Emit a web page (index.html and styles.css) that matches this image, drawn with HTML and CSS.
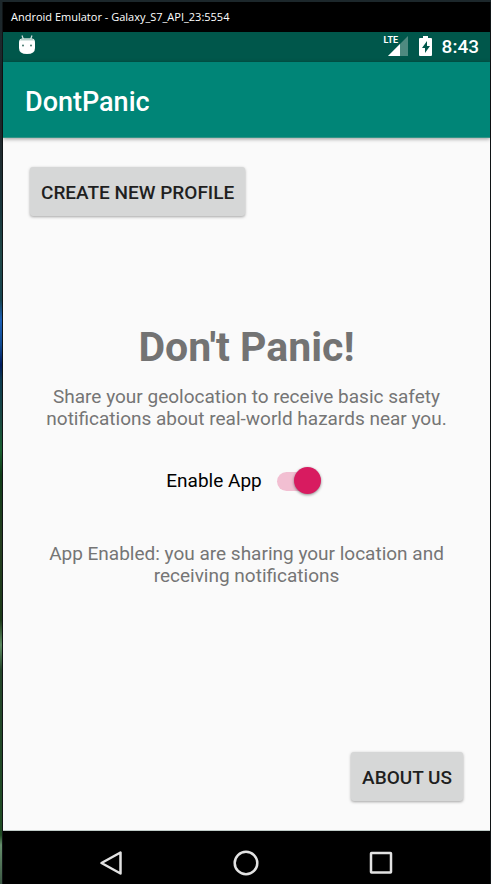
FILE: index.html
```html
<!DOCTYPE html>
<html lang="en">
<head>
<meta charset="utf-8">
<meta name="viewport" content="width=device-width, initial-scale=1">
<title>DontPanic</title>
<link rel="stylesheet" href="styles.css">
</head>
<body>
<div class="window">
  <div class="titlebar">Android Emulator - Galaxy_S7_API_23:5554</div>
  <div class="status">
    <svg class="droid" width="18" height="20" viewBox="0 0 18 20" aria-hidden="true">
      <path d="M4 .5l1.500 4M14 .5l-1.500 4" stroke="#d5e5e2" stroke-width="1.200" fill="none"/>
      <path d="M1 7.500Q1 3.500 4.500 3.500h9Q17 3.500 17 7.500V13Q17 19 9 19T1 13z" fill="#fff"/>
      <path d="M2 5.500Q3 3.500 5 3.500h8q2 0 3 2z" fill="#b5cfca"/>
      <circle cx="5" cy="10.500" r="1" fill="#42766c"/><circle cx="13" cy="10.500" r="1" fill="#42766c"/>
    </svg>
    <div class="signal">
      <span class="lte">LTE</span>
      <svg width="20" height="20" viewBox="0 0 20 20" aria-hidden="true">
        <path d="M20 0V20H0z" fill="#4f8a80"/><path d="M12 8V20H0z" fill="#fff"/>
      </svg>
    </div>
    <svg class="battery" width="13" height="20" viewBox="0 0 13 20" aria-hidden="true">
      <path d="M4 0h5v2h3q1 0 1 1v16q0 1-1 1H1q-1 0-1-1V3q0-1 1-1h3z" fill="#fff"/>
      <path d="M8 5L3 12h3v5l5-7H8z" fill="#00574b"/>
    </svg>
    <time class="clock">8:43</time>
  </div>
  <header class="appbar"><h1 class="apptitle">DontPanic</h1></header>
  <main class="content">
    <button class="btn" type="button">CREATE NEW PROFILE</button>
    <section class="intro">
      <h2 class="headline">Don't Panic!</h2>
      <p class="text">Share your geolocation to receive basic safety notifications about real-world hazards near you.</p>
      <label class="toggle" for="enable">Enable App
        <input class="switch" id="enable" type="checkbox" role="switch" checked>
      </label>
      <p class="text">App Enabled: you are sharing your location and receiving notifications</p>
    </section>
    <button class="btn about" type="button">ABOUT US</button>
  </main>
  <nav class="nav" aria-label="System">
    <button class="key" type="button" aria-label="Back"><svg width="26" height="26" viewBox="0 0 26 26"><path d="M22.500 2.500V23.500L3.500 13z"/></svg></button>
    <button class="key" type="button" aria-label="Home"><svg width="26" height="26" viewBox="0 0 26 26"><circle cx="13" cy="13" r="11.300"/></svg></button>
    <button class="key" type="button" aria-label="Recent apps"><svg width="26" height="26" viewBox="0 0 26 26"><rect x="3" y="3" width="20" height="19.500" rx=".5"/></svg></button>
  </nav>
</div>
</body>
</html>
```
FILE: styles.css
```css
* { box-sizing: border-box; }
body {
  margin: 0;
  min-height: 100vh;
  display: flex;
  padding: 2px 0 0 2px;
  background: linear-gradient(#1c272b 0, #20282c 140px, #19373c 210px, #204848 255px, #164450 300px, #1b60b8 320px, #104a90 345px, #001c60 365px, #0d3c50 380px, #1b4942 420px, #1a6030 450px, #103c18 475px, #253e20 540px, #1c3918 620px, #5d8b61 645px, #24452a 670px, #204c24 835px, #668e6c 845px, #3c5844 884px);
  font-family: Roboto, "Liberation Sans", sans-serif;
}
.window {
  flex: 1;
  display: flex;
  flex-direction: column;
  border: solid #101416;
  border-width: 0 1px;
  background: #000;
}
.titlebar {
  height: 30px;
  padding-left: 8px;
  color: #fff;
  font: 11px/30px "Open Sans", sans-serif;
}
.status {
  display: flex;
  align-items: center;
  height: 30px;
  padding: 0 11px 0 15px;
  background: #00574b;
  color: #fff;
}
.droid { margin-bottom: 4px; }
.signal {
  position: relative;
  display: flex;
  justify-content: flex-end;
  width: 24px;
  margin: 0 11px 0 auto;
  padding-bottom: 2px;
}
.battery { margin-bottom: 2px; }
.lte {
  position: absolute;
  left: 0;
  top: 0;
  font: bold 9px/9px "Liberation Sans Narrow", Roboto, sans-serif;
}
.clock {
  margin-left: 10px;
  font-size: 19px;
  line-height: 30px;
  font-weight: 500;
}
.appbar {
  position: relative;
  height: 76px;
  padding: 2px 22px 0;
  background: #008577;
  border-bottom: 1px solid #329487;
  box-shadow: 0 1px 4px rgba(0, 0, 0, .4);
}
.apptitle {
  margin: 0;
  color: #fff;
  font-size: 27px;
  line-height: 76px;
  font-weight: 500;
}
.content {
  flex: 1;
  display: flex;
  flex-direction: column;
  align-items: flex-start;
  padding: 29px 27px;
  background: #fafafa;
  border-bottom: 1px solid #c0cbc8;
}
.btn {
  height: 49px;
  padding: 2px 11px 0;
  border: 0;
  border-radius: 3px;
  background: #d6d7d7;
  box-shadow: 0 1px 3px rgba(0, 0, 0, .35);
  color: #1f1f1f;
  font: 500 19px/47px Roboto, sans-serif;
}
.about { margin-top: auto; align-self: flex-end; }
.intro {
  align-self: stretch;
  display: flex;
  flex-direction: column;
  align-items: center;
  margin-top: 106px;
  text-align: center;
}
.headline {
  margin: 0 0 14px;
  color: #737373;
  font-size: 41px;
  line-height: 50px;
  font-weight: 700;
}
.text {
  max-width: 412px;
  margin: 0;
  color: #757575;
  font-size: 19px;
  line-height: 22px;
}
.toggle {
  display: flex;
  align-items: center;
  gap: 15px;
  margin: 36px 0 47px;
  padding-right: 6px;
  color: #000;
  font-size: 19px;
  line-height: 30px;
}
.switch {
  appearance: none;
  position: relative;
  width: 44px;
  height: 28px;
  margin: 0;
}
.switch::before {
  content: "";
  position: absolute;
  inset: 5px 2px 4px 0;
  border-radius: 10px;
  background: #f2bfd2;
}
.switch::after {
  content: "";
  position: absolute;
  right: 0;
  top: 0;
  width: 27px;
  height: 27px;
  border-radius: 50%;
  background: #d81b60;
  box-shadow: 0 1px 3px rgba(0, 0, 0, .45);
}
.switch:not(:checked)::before { background: #b9b9b9; }
.switch:not(:checked)::after { right: auto; left: 0; background: #f1f1f1; }
.nav {
  display: flex;
  justify-content: center;
  gap: 109px;
  height: 53px;
  padding: 19px 2px 0 0;
}
.key {
  width: 26px;
  height: 26px;
  padding: 0;
  border: 0;
  background: none;
}
.key svg {
  display: block;
  fill: none;
  stroke: #e2e2e2;
  stroke-width: 2.5;
  stroke-linejoin: round;
}
```
